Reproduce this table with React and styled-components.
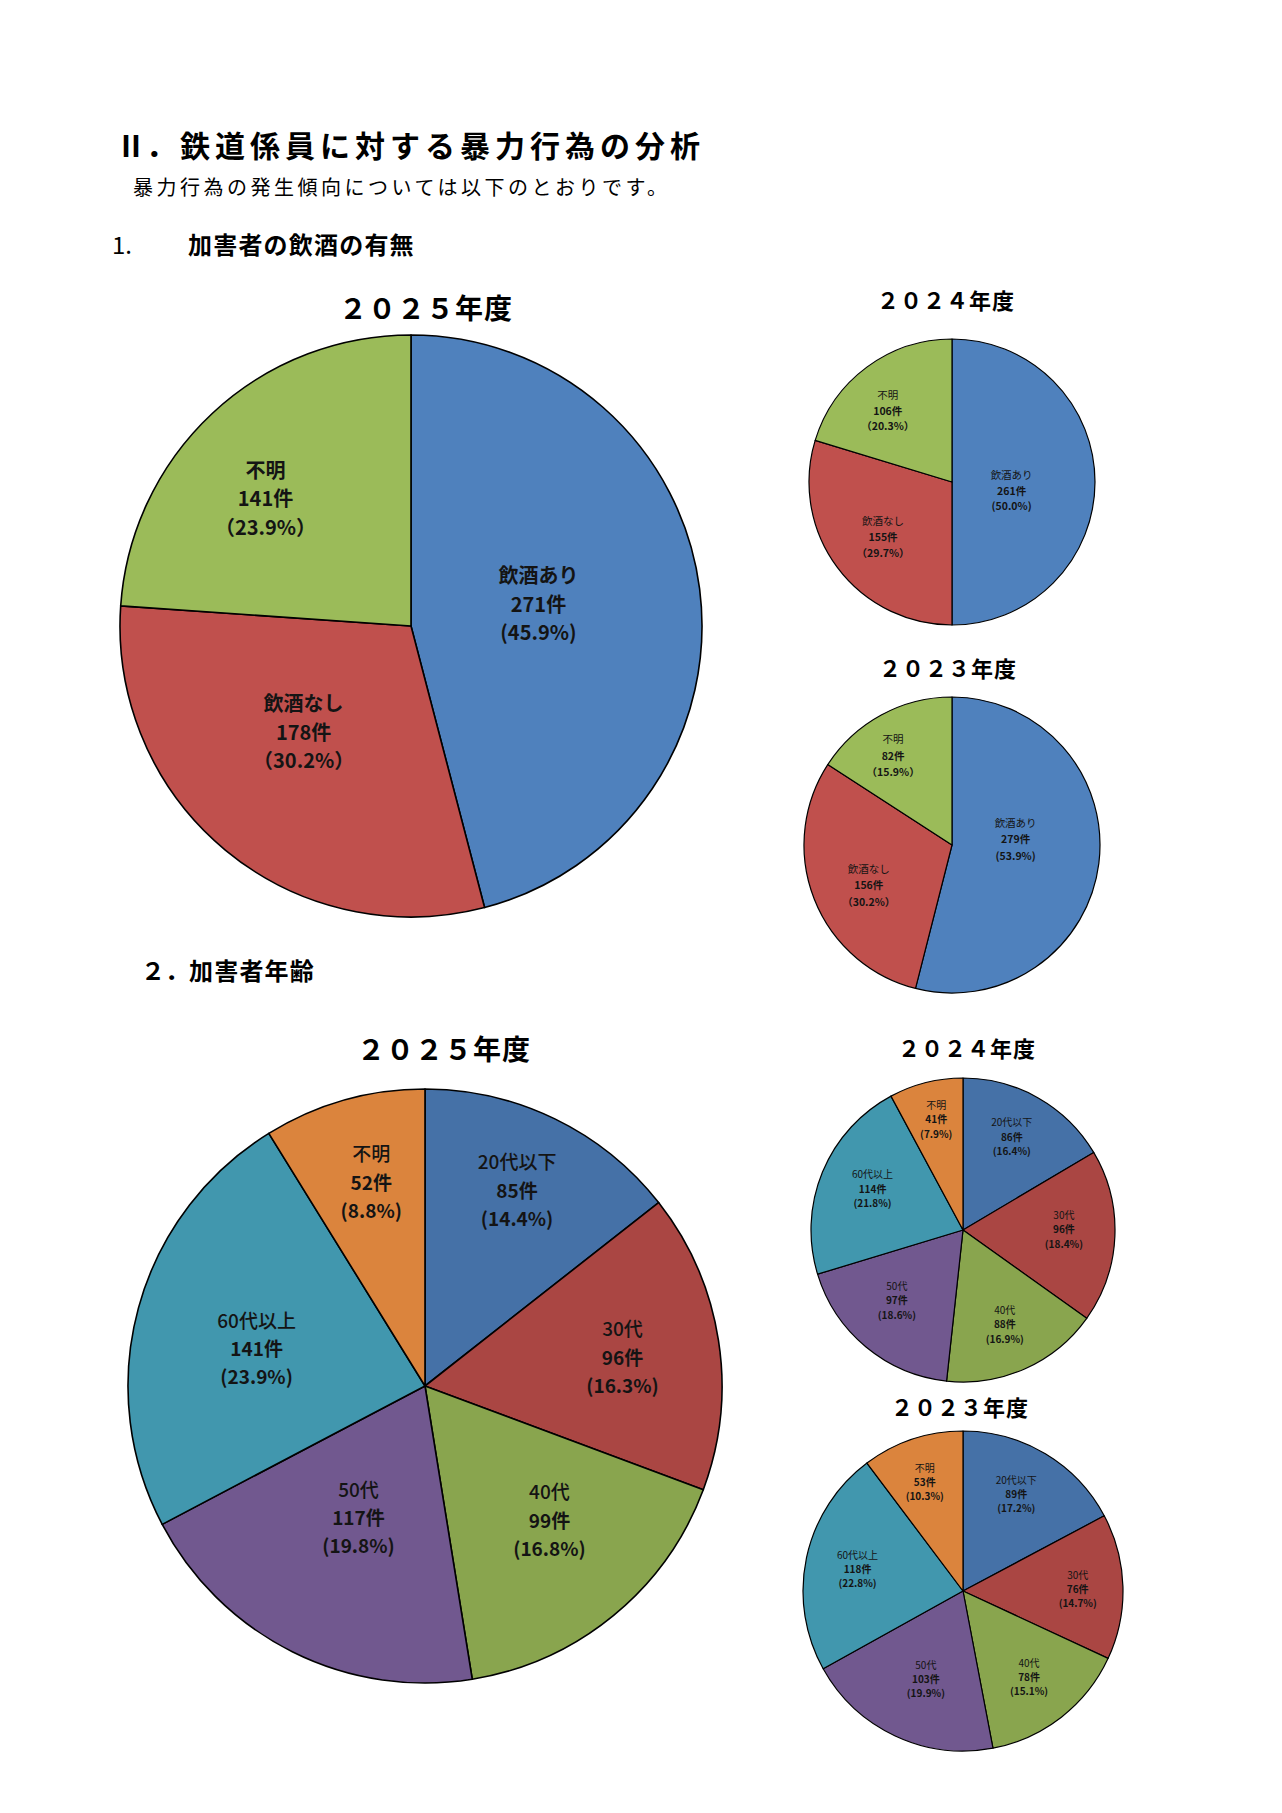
import React from 'react';
import styled, { createGlobalStyle } from 'styled-components';

const GlobalStyle = createGlobalStyle`
  body {
    margin: 0;
    background: #fff;
    color: #000;
    font-family: "Noto Sans CJK JP", "Noto Sans", sans-serif;
  }
`;

const Page = styled.main`
  width: 1282px;
  min-height: 1813px;
  box-sizing: border-box;
  padding-top: 124px;
`;

const Title = styled.h1`
  display: flex;
  margin: 0 0 0 116px;
  font-size: 30px;
  line-height: 40px;
  font-weight: 700;
  letter-spacing: 5px;
  white-space: nowrap;
`;

const Numeral = styled.span`
  flex: 0 0 64px;
  min-width: 0;
  letter-spacing: 0;
`;

const Lead = styled.p`
  margin: 9px 0 0 133px;
  font-size: 20px;
  line-height: 28px;
  font-weight: 400;
  letter-spacing: 3.5px;
  white-space: nowrap;
`;

const Heading = styled.h2`
  display: flex;
  margin: ${p => p.$top}px 0 0 ${p => p.$left}px;
  font-size: 24px;
  line-height: 30px;
  font-weight: 700;
  letter-spacing: 1.2px;
  white-space: nowrap;
`;

const HeadingNo = styled.span`
  flex: 0 0 ${p => p.$w}px;
  font-weight: ${p => p.$weight};
  letter-spacing: 0;
`;

const ChartRow = styled.section`
  display: grid;
  grid-template-columns: ${p => p.$left}px ${p => p.$right}px;
  column-gap: ${p => p.$gap}px;
  align-items: start;
  margin: ${p => p.$top}px 0 0 ${p => p.$indent}px;
`;

const Column = styled.div`
  display: flex;
  flex-direction: column;
  gap: ${p => p.$gap || 0}px;
`;

const Chart = styled.figure`
  display: flex;
  flex-direction: column;
  align-items: center;
  gap: ${p => p.$gap}px;
  margin: ${p => p.$top || 0}px 0 0;
`;

const ChartTitle = styled.figcaption`
  font-size: ${p => p.$size}px;
  line-height: ${p => p.$size + 6}px;
  font-weight: 700;
  letter-spacing: 1px;
  white-space: nowrap;
  padding-left: ${p => Math.max(0, 2 * (p.$shift || 0))}px;
  padding-right: ${p => Math.max(0, -2 * (p.$shift || 0))}px;
`;

const PieSvg = styled.svg`
  display: block;
  overflow: visible;
  text {
    font-family: "Noto Sans CJK JP", "Noto Sans", sans-serif;
    fill: #141414;
  }
`;

const DRINK = { yes: '#4F81BD', no: '#C0504D', unknown: '#9BBB59' };
const AGE = {
  a20: '#4571A7',
  a30: '#AA4643',
  a40: '#89A54E',
  a50: '#71588F',
  a60: '#4197AE',
  unknown: '#DB843D',
};

const pct = (v, full) => (full ? `（${v}%）` : `(${v}%)`);

const drink2025 = [
  { name: '飲酒あり', count: 271, p: '45.9', color: DRINK.yes, lx: 0.438, ly: -0.078 },
  { name: '飲酒なし', count: 178, p: '30.2', full: true, color: DRINK.no, lx: -0.369, ly: 0.361 },
  { name: '不明', count: 141, p: '23.9', full: true, color: DRINK.unknown, lx: -0.5, ly: -0.44 },
];

const drink2024 = [
  { name: '飲酒あり', count: 261, p: '50.0', color: DRINK.yes, lx: 0.417, ly: 0.057 },
  { name: '飲酒なし', count: 155, p: '29.7', full: true, color: DRINK.no, lx: -0.482, ly: 0.381 },
  { name: '不明', count: 106, p: '20.3', full: true, color: DRINK.unknown, lx: -0.449, ly: -0.502 },
];

const drink2023 = [
  { name: '飲酒あり', count: 279, p: '53.9', color: DRINK.yes, lx: 0.43, ly: -0.043 },
  { name: '飲酒なし', count: 156, p: '30.2', full: true, color: DRINK.no, lx: -0.5625, ly: 0.27 },
  { name: '不明', count: 82, p: '15.9', full: true, color: DRINK.unknown, lx: -0.398, ly: -0.605 },
];

const age2025 = [
  { name: '20代以下', count: 85, p: '14.4', color: AGE.a20, lx: 0.31, ly: -0.663 },
  { name: '30代', count: 96, p: '16.3', color: AGE.a30, lx: 0.665, ly: -0.101 },
  { name: '40代', count: 99, p: '16.8', color: AGE.a40, lx: 0.419, ly: 0.448 },
  { name: '50代', count: 117, p: '19.8', color: AGE.a50, lx: -0.224, ly: 0.44 },
  { name: '60代以上', count: 141, p: '23.9', color: AGE.a60, lx: -0.567, ly: -0.129 },
  { name: '不明', count: 52, p: '8.8', color: AGE.unknown, lx: -0.181, ly: -0.69 },
];

const age2024 = [
  { name: '20代以下', count: 86, p: '16.4', color: AGE.a20, lx: 0.321, ly: -0.618 },
  { name: '30代', count: 96, p: '18.4', color: AGE.a30, lx: 0.664, ly: -0.008 },
  { name: '40代', count: 88, p: '16.9', color: AGE.a40, lx: 0.275, ly: 0.618 },
  { name: '50代', count: 97, p: '18.6', color: AGE.a50, lx: -0.435, ly: 0.458 },
  { name: '60代以上', count: 114, p: '21.8', color: AGE.a60, lx: -0.595, ly: -0.275 },
  { name: '不明', count: 41, p: '7.9', color: AGE.unknown, lx: -0.176, ly: -0.733 },
];

const age2023 = [
  { name: '20代以下', count: 89, p: '17.2', color: AGE.a20, lx: 0.333, ly: -0.612 },
  { name: '30代', count: 76, p: '14.7', color: AGE.a30, lx: 0.717, ly: -0.018 },
  { name: '40代', count: 78, p: '15.1', color: AGE.a40, lx: 0.413, ly: 0.533 },
  { name: '50代', count: 103, p: '19.9', color: AGE.a50, lx: -0.232, ly: 0.547 },
  { name: '60代以上', count: 118, p: '22.8', color: AGE.a60, lx: -0.659, ly: -0.141 },
  { name: '不明', count: 53, p: '10.3', color: AGE.unknown, lx: -0.239, ly: -0.685 },
];

// slices run clockwise from 12 o'clock, like the Excel charts
const Pie = ({ data, r, pad = 2, font, line, stroke = 1.3, weights = [700, 700, 700] }) => {
  const total = data.reduce((s, d) => s + d.count, 0);
  const c = r + pad;
  const size = 2 * c;
  let acc = 0;

  const slices = data.map(d => {
    const a0 = (acc / total) * 2 * Math.PI;
    acc += d.count;
    const a1 = (acc / total) * 2 * Math.PI;
    const x0 = c + r * Math.sin(a0);
    const y0 = c - r * Math.cos(a0);
    const x1 = c + r * Math.sin(a1);
    const y1 = c - r * Math.cos(a1);
    const large = a1 - a0 > Math.PI ? 1 : 0;
    return { ...d, path: `M${c},${c} L${x0},${y0} A${r},${r} 0 ${large} 1 ${x1},${y1} Z` };
  });

  return (
    <PieSvg width={size} height={size} viewBox={`0 0 ${size} ${size}`}>
      {slices.map(s => (
        <path key={s.name} d={s.path} fill={s.color} stroke="#000" strokeWidth={stroke} strokeLinejoin="round" />
      ))}
      {slices.map(s => {
        const x = c + s.lx * r;
        const y = c + s.ly * r;
        const lines = [s.name, `${s.count}件`, pct(s.p, s.full)];
        return (
          <text key={s.name + '-l'} textAnchor="middle" fontSize={font}>
            {lines.map((t, i) => (
              <tspan key={i} x={x} y={y + (i - 1) * line} dominantBaseline="central" fontWeight={weights[i]}>
                {t}
              </tspan>
            ))}
          </text>
        );
      })}
    </PieSvg>
  );
};

const App = () => (
  <Page>
    <GlobalStyle />
    <Title>
      <Numeral>Ⅱ．</Numeral>
      鉄道係員に対する暴力行為の分析
    </Title>
    <Lead>暴力行為の発生傾向については以下のとおりです。</Lead>
    <Heading $top={28} $left={112}>
      <HeadingNo $w={76} $weight={400}>1.</HeadingNo>
      加害者の飲酒の有無
    </Heading>

    <ChartRow $top={26} $indent={118} $left={586} $right={320} $gap={88}>
      <Column>
        <Chart $top={5} $gap={9}>
          <ChartTitle $size={28} $shift={15}>２０２５年度</ChartTitle>
          <Pie data={drink2025} r={291} pad={2} font={20} line={28.4} stroke={1.6} />
        </Chart>
        <Heading $top={36} $left={23}>
          <HeadingNo $w={47} $weight={700}>２．</HeadingNo>
          加害者年齢
        </Heading>
      </Column>
      <Column $gap={26}>
        <Chart $gap={24}>
          <ChartTitle $size={22} $shift={-6}>２０２４年度</ChartTitle>
          <Pie data={drink2024} r={143} font={10.5} line={15.6} stroke={1.2} weights={[400, 700, 700]} />
        </Chart>
        <Chart $gap={14}>
          <ChartTitle $size={22} $shift={-4}>２０２３年度</ChartTitle>
          <Pie data={drink2023} r={148} font={10.5} line={16.5} stroke={1.2} weights={[400, 700, 700]} />
        </Chart>
      </Column>
    </ChartRow>

    <ChartRow $top={36} $indent={125} $left={600} $right={340} $gap={68}>
      <Column>
        <Chart $gap={21}>
          <ChartTitle $size={28} $shift={19}>２０２５年度</ChartTitle>
          <Pie data={age2025} r={297} pad={3} font={19} line={28.3} stroke={1.6} weights={[500, 700, 700]} />
        </Chart>
      </Column>
      <Column $gap={8}>
        <Chart $top={2} $gap={15}>
          <ChartTitle $size={22} $shift={4}>２０２４年度</ChartTitle>
          <Pie data={age2024} r={152} font={10} line={14.5} stroke={1.2} weights={[400, 700, 700]} />
        </Chart>
        <Chart $gap={9}>
          <ChartTitle $size={22} $shift={-3}>２０２３年度</ChartTitle>
          <Pie data={age2023} r={160} font={10} line={14} stroke={1.2} weights={[400, 700, 700]} />
        </Chart>
      </Column>
    </ChartRow>
  </Page>
);

export default App;
